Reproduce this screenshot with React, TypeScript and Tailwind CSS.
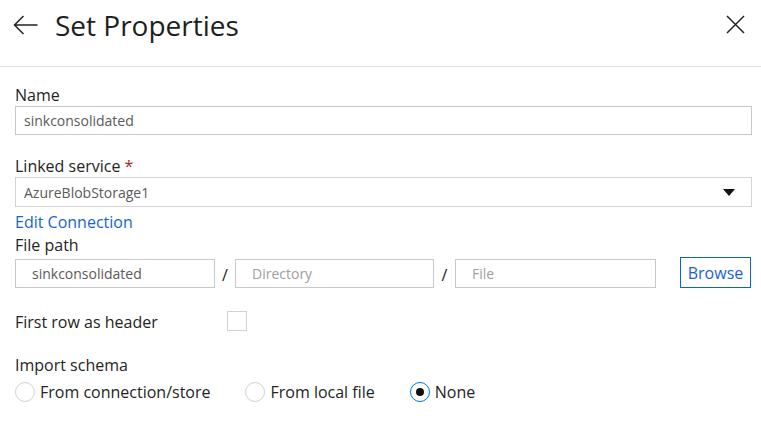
import React from "react";

const font = { fontFamily: '"Segoe UI", "Open Sans", "Noto Sans", sans-serif' };

function Radio({ checked, label }: { checked?: boolean; label: string }) {
  return (
    <div className="flex items-center gap-[5px]">
      <span
        className={
          "w-[20px] h-[20px] rounded-full border flex items-center justify-center shrink-0 " +
          (checked ? "border-[#0078d4]" : "border-[#d2d2d2]")
        }
      >
        {checked && <span className="w-[8px] h-[8px] rounded-full bg-[#111]" />}
      </span>
      <span className="text-[16px] leading-[22px] text-[#252423]">{label}</span>
    </div>
  );
}

export default function App() {
  return (
    <div className="w-[761px] h-[432px] bg-white text-[#252423]" style={font}>
      <div className="h-[67px] border-b border-[#e1e1e1] flex items-start">
        <svg className="ml-[13px] mt-[15px]" width="25" height="20" viewBox="0 0 25 20" fill="none">
          <path d="M24.5 10H1.5M10.5 1L1.5 10L10.5 19" stroke="#222" strokeWidth="1.5" />
        </svg>
        <div className="ml-[17px] mt-[7px] text-[28px] leading-[36px] text-[#201f1e]">Set Properties</div>
        <div className="flex-1" />
        <svg className="mr-[16px] mt-[15px]" width="19" height="19" viewBox="0 0 19 19" fill="none">
          <path d="M1 1L18 18M18 1L1 18" stroke="#222" strokeWidth="1.5" />
        </svg>
      </div>

      <div className="px-[15px] pr-[9px]">
        <div className="mt-[17px] text-[16px] leading-[22px]">Name</div>
        <div className="h-[29px] border border-[#c8c8c8] flex items-center pl-[8px] text-[14px] text-[#5a5a5a]">
          sinkconsolidated
        </div>

        <div className="mt-[20px] text-[16px] leading-[22px]">
          Linked service <span className="text-[#a4262c]">*</span>
        </div>
        <div className="h-[30px] border border-[#d4d4d4] flex items-center pl-[8px] pr-[16px] text-[14px] text-[#5a5a5a]">
          <span className="flex-1">AzureBlobStorage1</span>
          <svg width="12" height="7" viewBox="0 0 12 7">
            <path d="M0 0H12L6 7Z" fill="#111" />
          </svg>
        </div>

        <div className="mt-[4px] text-[16px] leading-[23px] text-[#1a62d0]">Edit Connection</div>
        <div className="text-[16px] leading-[23px]">File path</div>

        <div className="flex items-end">
          <div className="w-[200px] h-[29px] border border-[#c8c8c8] flex items-center pl-[16px] text-[14px] text-[#5a5a5a]">
            sinkconsolidated
          </div>
          <div className="w-[20px] text-center text-[16px] leading-[26px] text-[#222]">/</div>
          <div className="w-[199px] h-[29px] border border-[#c8c8c8] flex items-center pl-[16px] text-[14px] text-[#a0a0a0]">
            Directory
          </div>
          <div className="w-[21px] text-center text-[16px] leading-[26px] text-[#222]">/</div>
          <div className="w-[201px] h-[29px] border border-[#c8c8c8] flex items-center pl-[16px] text-[14px] text-[#a0a0a0]">
            File
          </div>
          <div className="ml-[24px] w-[71px] h-[31px] border border-[#0b62d6] flex items-center justify-center text-[16px] text-[#1a62d0]">
            Browse
          </div>
        </div>

        <div className="mt-[23px] flex items-start">
          <div className="w-[212px] text-[16px] leading-[22px]">First row as header</div>
          <div className="w-[20px] h-[20px] border border-[#d2d2d2]" />
        </div>

        <div className="mt-[21px] text-[16px] leading-[22px]">Import schema</div>
        <div className="mt-[5px] flex items-center gap-[35px]">
          <Radio label="From connection/store" />
          <Radio label="From local file" />
          <Radio checked label="None" />
        </div>
      </div>
    </div>
  );
}
